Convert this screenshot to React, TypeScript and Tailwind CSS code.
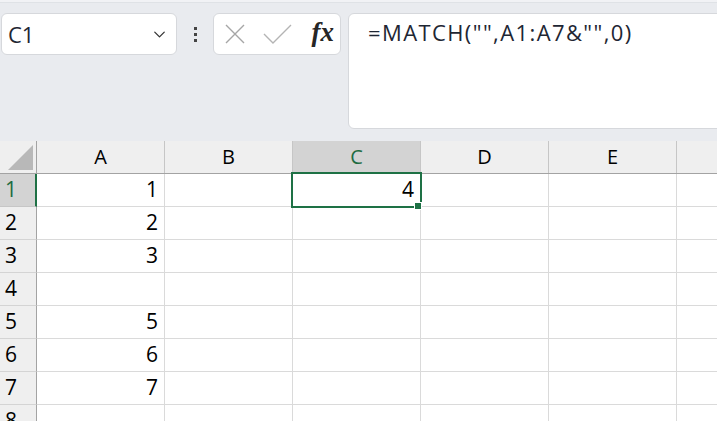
import { ChevronDown } from "lucide-react";

const cols = ["A", "B", "C", "D", "E"];
const rows = [
  { n: 1, a: "1", c: "4" },
  { n: 2, a: "2" },
  { n: 3, a: "3" },
  { n: 4, a: "" },
  { n: 5, a: "5" },
  { n: 6, a: "6" },
  { n: 7, a: "7" },
  { n: 8, a: "" },
];

const ui = { fontFamily: '"Open Sans", "Liberation Sans", sans-serif' };

export default function App() {
  return (
    <div
      className="w-[717px] h-[421px] overflow-hidden bg-[#e9ebef] relative text-[#1f1f1f]"
      style={ui}
    >
      <div className="h-[3px] bg-[#f1f2f5] border-b border-[#dfe2e6]" />

      {/* formula bar */}
      <div className="flex items-start pt-[10px] pl-[1px] h-[138px]">
        <div className="w-[176px] h-[42px] shrink-0 bg-white border border-[#d6d8dc] rounded-[6px] flex items-center justify-between pl-[6px] pr-[7px]">
          <span className="text-[22px] leading-none text-[#1e2633]">C1</span>
          <ChevronDown size={19} strokeWidth={1.6} className="text-[#333]" />
        </div>
        <div className="w-[36px] h-[42px] shrink-0 flex flex-col items-center justify-center gap-[3px] pl-[1px]">
          <span className="w-[3px] h-[3px] bg-[#444]" />
          <span className="w-[3px] h-[3px] bg-[#444]" />
          <span className="w-[3px] h-[3px] bg-[#444]" />
        </div>
        <div className="w-[128px] h-[42px] shrink-0 bg-white border border-[#d6d8dc] rounded-[6px] flex items-center pl-[10px] pr-[6px]">
          <svg width="22" height="22" viewBox="0 0 22 22" fill="none" stroke="#a6a6a6" strokeWidth="1.4">
            <path d="M2 2 L20 20 M20 2 L2 20" />
          </svg>
          <svg width="30" height="22" viewBox="0 0 30 22" fill="none" stroke="#b4b4b4" strokeWidth="1.4" className="ml-[17px]">
            <path d="M1 11 L10 20 L28 2" />
          </svg>
          <span
            className="ml-auto text-[27px] leading-none italic font-bold text-[#262626] pb-[3px]"
            style={{ fontFamily: '"Liberation Serif", "DejaVu Serif", serif' }}
          >
            fx
          </span>
        </div>
        <div className="ml-[7px] w-[400px] h-[116px] shrink-0 bg-white border border-[#d6d8dc] rounded-[6px] pl-[19px] pt-[3px]">
          <span className="text-[22px] leading-[30px] text-[#1e2633] tracking-[1.4px]">
            =MATCH("",A1:A7&amp;"",0)
          </span>
        </div>
      </div>

      {/* sheet */}
      <div className="relative">
        <div className="flex h-[33px] bg-[#efefef] border-b border-[#a3a3a3]">
          <div className="w-[37px] shrink-0 border-r border-[#a3a3a3] relative">
            <svg width="26" height="25" viewBox="0 0 26 25" className="absolute left-[8px] top-[4px]">
              <path d="M25 0 L25 25 L0 25 Z" fill="#b8b8b8" />
            </svg>
          </div>
          {cols.map((c) => (
            <div
              key={c}
              className={`w-[128px] shrink-0 border-r border-[#c6c6c6] flex items-center justify-center text-[20px] ${
                c === "C" ? "bg-[#d3d3d3] text-[#1e6b41]" : "text-black"
              }`}
            >
              {c}
            </div>
          ))}
          <div className="flex-1" />
        </div>

        {rows.map((r) => (
          <div key={r.n} className="flex h-[33px] bg-white">
            <div
              className={`w-[37px] shrink-0 border-r border-b flex items-center pl-[5px] text-[21px] ${
                r.n === 1
                  ? "bg-[#d3d3d3] text-[#1e6b41] border-r-[#1e7145] border-r-2 border-b-[#c6c6c6]"
                  : "bg-[#efefef] text-black border-r-[#a3a3a3] border-b-[#d4d4d4]"
              }`}
            >
              {r.n}
            </div>
            {cols.map((c) => {
              const v = c === "A" ? r.a : c === "C" ? r.c ?? "" : "";
              return (
                <div
                  key={c}
                  className="w-[128px] shrink-0 border-r border-b border-[#dadada] flex items-center justify-end pr-[6px] text-[21px] text-black"
                >
                  {v}
                </div>
              );
            })}
            <div className="flex-1 border-b border-[#dadada]" />
          </div>
        ))}

        {/* selection */}
        <div className="absolute left-[291px] top-[31px] w-[131px] h-[36px] border-2 border-[#1e7145] pointer-events-none" />
        <div className="absolute left-[414px] top-[61px] w-[8px] h-[8px] bg-[#1e7145] border border-white" />
      </div>
    </div>
  );
}
